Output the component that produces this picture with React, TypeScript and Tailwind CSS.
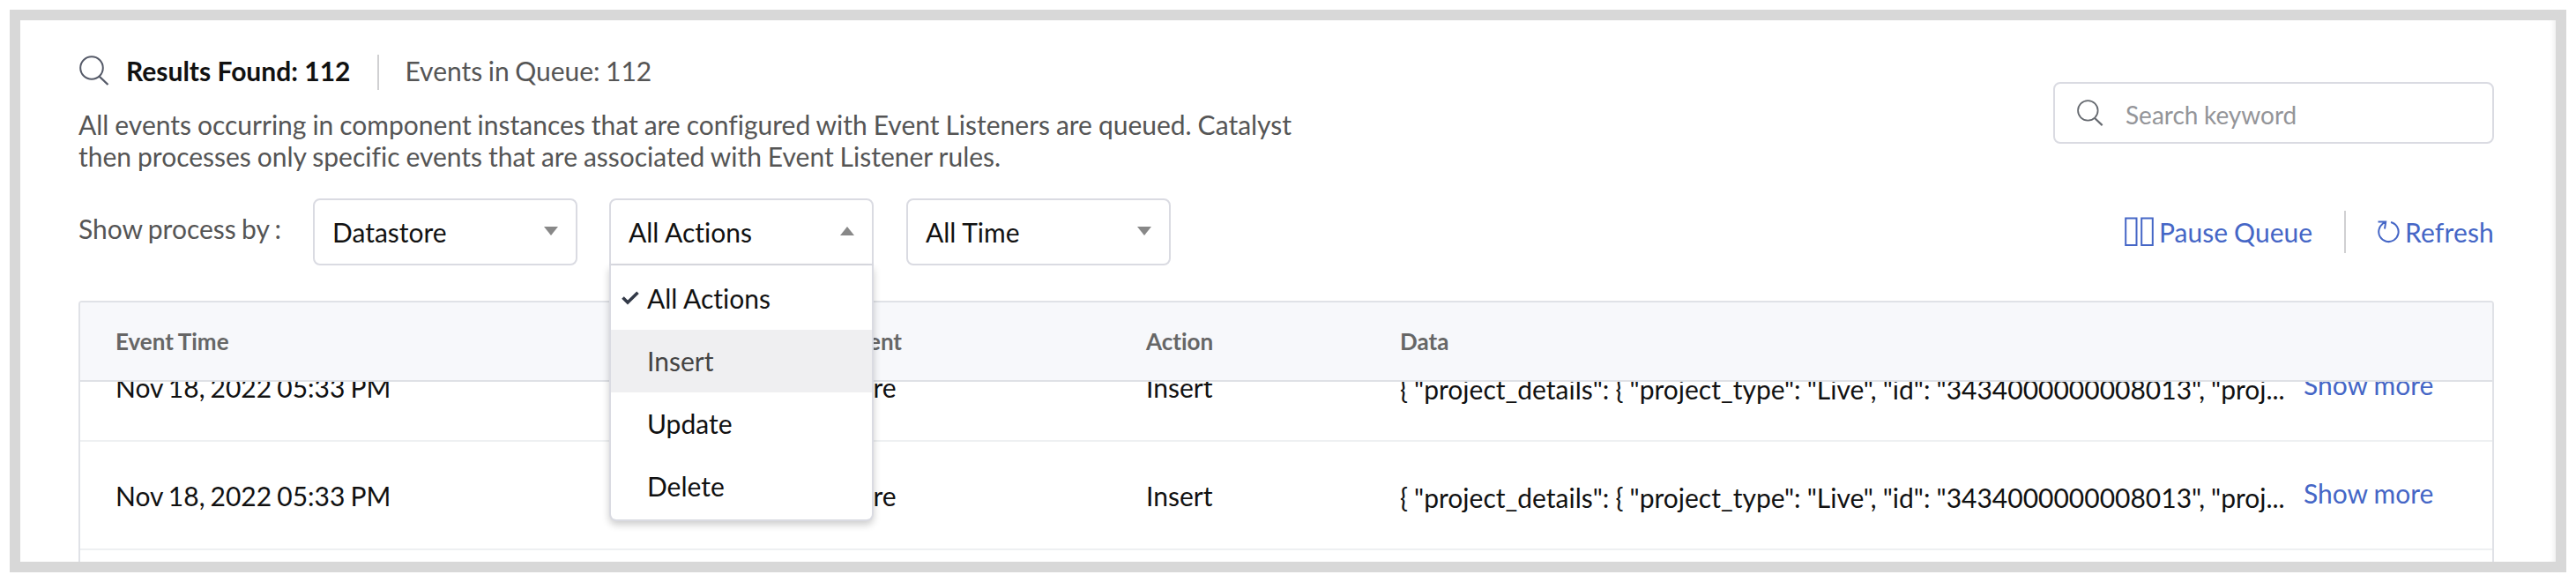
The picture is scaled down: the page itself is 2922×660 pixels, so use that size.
import { useState } from "react";
import clsx from "clsx";

interface EventRow {
  id: number;
  time: string;
  component: string;
  action: string;
  data: string;
}

const ACTIONS = ["All Actions", "Insert", "Update", "Delete"];

const DATA =
  '{ "project_details": { "project_type": "Live", "id": "3434000000008013", "proj...';

const ROWS: EventRow[] = [1, 2].map((id) => ({
  id,
  time: "Nov 18, 2022 05:33 PM",
  component: "Datastore",
  action: "Insert",
  data: DATA,
}));

function SearchIcon({ className }: { className?: string }) {
  return (
    <svg viewBox="0 0 34 34" fill="none" className={className}>
      <circle cx="14" cy="14" r="12.8" stroke="currentColor" strokeWidth="2" />
      <path d="M22.5 23.5L32.5 33" stroke="currentColor" strokeWidth="2.4" />
    </svg>
  );
}

function Caret({ up }: { up?: boolean }) {
  return (
    <svg viewBox="0 0 16 10" className="mb-[3px] h-[10px] w-4 fill-[#888]">
      <path d={up ? "M8 0L16 10H0z" : "M0 0H16L8 10z"} />
    </svg>
  );
}

function Select({ label, open }: { label: string; open?: boolean }) {
  return (
    <button
      className={clsx(
        "flex h-[76px] w-[300px] items-center justify-between border-2 border-[#dadbe2] bg-white pr-5 pl-5 text-[#111]",
        open ? "rounded-t-lg" : "rounded-lg"
      )}
    >
      <span>{label}</span>
      <Caret up={open} />
    </button>
  );
}

export default function App() {
  const [selected, setSelected] = useState("All Actions");
  const hovered = "Insert";

  return (
    <div className="h-[660px] w-[2922px] overflow-hidden bg-white p-[11px] font-['Lato',sans-serif] text-[30px] leading-[36px] text-[#555] [font-variant-ligatures:no-common-ligatures] [word-spacing:-0.6px]">
      <div className="h-[638px] w-[2900px] overflow-hidden border-12 border-[#d8d8d8] pt-[39px] pr-[70px] pl-[66px] shadow-[inset_-7px_0_6px_-5px_rgba(0,0,0,0.08)]">
        {/* Title and search */}
        <div className="flex h-[163px] justify-between">
          <div>
            <div className="flex h-10 items-center">
              <SearchIcon className="mt-[-5px] ml-px h-[34px] w-[34px] text-[#555a68]" />
              <span className="ml-[19px] pb-[5px] font-bold text-[#111] [word-spacing:0px]">
                Results Found: 112
              </span>
              <span className="ml-[31px] h-10 w-[2px] bg-[#d0d0d2]" />
              <span className="ml-[29px] pb-[5px] [word-spacing:-1.2px]">
                Events in Queue: 112
              </span>
            </div>
            <p className="mt-[21px] [word-spacing:-0.75px]">
              All events occurring in component instances that are configured
              with Event Listeners are queued. Catalyst
              <br />
              then processes only specific events that are associated with Event
              Listener rules.
            </p>
          </div>
          <label className="mt-[31px] flex h-[70px] w-[500px] items-center rounded-lg border-2 border-[#dadbe2] pl-[25px]">
            <SearchIcon className="h-[30px] w-[30px] text-[#666a70]" />
            <span className="ml-[25px] pt-[3px] text-[28px] text-[#949599]">
              Search keyword
            </span>
          </label>
        </div>

        {/* Filters */}
        <div className="flex h-[76px] items-center">
          <span className="w-[266px] pb-[8px] [word-spacing:-1.4px]">
            Show process by :
          </span>
          <div className="flex gap-[36px]">
            <Select label="Datastore" />
            <div className="relative mr-px">
              <Select label={selected} open />
              <ul className="absolute top-[76px] left-0 z-20 h-[290px] w-[300px] rounded-b-lg border-2 border-t-0 border-[#dadbe2] bg-white pt-[2px] text-[#111] shadow-[0_4px_8px_rgba(0,0,0,0.2)]">
                {ACTIONS.map((action) => (
                  <li
                    key={action}
                    onClick={() => setSelected(action)}
                    className={clsx(
                      "flex h-[71px] items-center pb-px pl-[12px]",
                      action === hovered && "bg-[#efeff1] text-[#444]"
                    )}
                  >
                    <span className="w-[29px]">
                      {action === selected && (
                        <svg viewBox="0 0 20 16" fill="none" className="w-5">
                          <path
                            d="M1.5 7.5L7 13L18.5 1.8"
                            stroke="#333a48"
                            strokeWidth="3.6"
                          />
                        </svg>
                      )}
                    </span>
                    <span className="[word-spacing:0px]">{action}</span>
                  </li>
                ))}
              </ul>
            </div>
            <Select label="All Time" />
          </div>
          <div className="ml-auto flex items-center text-[#4566c6]">
            <svg viewBox="0 0 33 34" fill="none" className="h-[34px] w-[33px]">
              <path
                d="M1.2 1.5H13.5V32H1.2zM19.2 1.5H31.8V32H19.2z"
                stroke="currentColor"
                strokeWidth="2"
              />
            </svg>
            <span className="ml-[6px]">Pause Queue</span>
            <span className="ml-[36px] h-12 w-[2px] bg-[#d0d0d2]" />
            <svg
              viewBox="0 0 26 26"
              fill="none"
              className="ml-[36px] h-[26px] w-[26px]"
            >
              <path
                d="M15 2A11.2 11.2 0 1 1 1.6 10C2.6 6.5 5 3.5 9 1.6M.5 1.5H9.2L8 9.5"
                stroke="currentColor"
                strokeWidth="2"
              />
            </svg>
            <span className="ml-[5px] tracking-[0.15px]">Refresh</span>
          </div>
        </div>

        {/* Events table */}
        <div className="mt-10 h-[340px] overflow-hidden rounded-t-sm border-2 border-[#e0e2e7]">
          <div className="relative z-10 grid h-[90px] grid-cols-[756px_413px_288px_1fr] items-center border-b-2 border-[#dfe1e6] bg-[#f7f8fb] pl-10 text-[26px] font-bold text-[#666]">
            <span>Event Time</span>
            <span>Component</span>
            <span>Action</span>
            <span>Data</span>
          </div>
          {/* List is scrolled, first row sits partly under the header */}
          <div className="mt-[-55px]">
            {ROWS.map((row) => (
              <div
                key={row.id}
                className="grid h-[123px] grid-cols-[756px_413px_288px_1fr] items-center border-b-2 border-[#eef0f2] pl-10 text-[#111]"
              >
                <span className="[word-spacing:-1.6px]">{row.time}</span>
                <span>{row.component}</span>
                <span>{row.action}</span>
                <div className="flex items-center">
                  <span className="w-[1025px] pt-[4px] whitespace-nowrap">
                    {row.data}
                  </span>
                  <a className="pb-[5px] text-[#4566c6]">Show more</a>
                </div>
              </div>
            ))}
          </div>
        </div>
      </div>
    </div>
  );
}
